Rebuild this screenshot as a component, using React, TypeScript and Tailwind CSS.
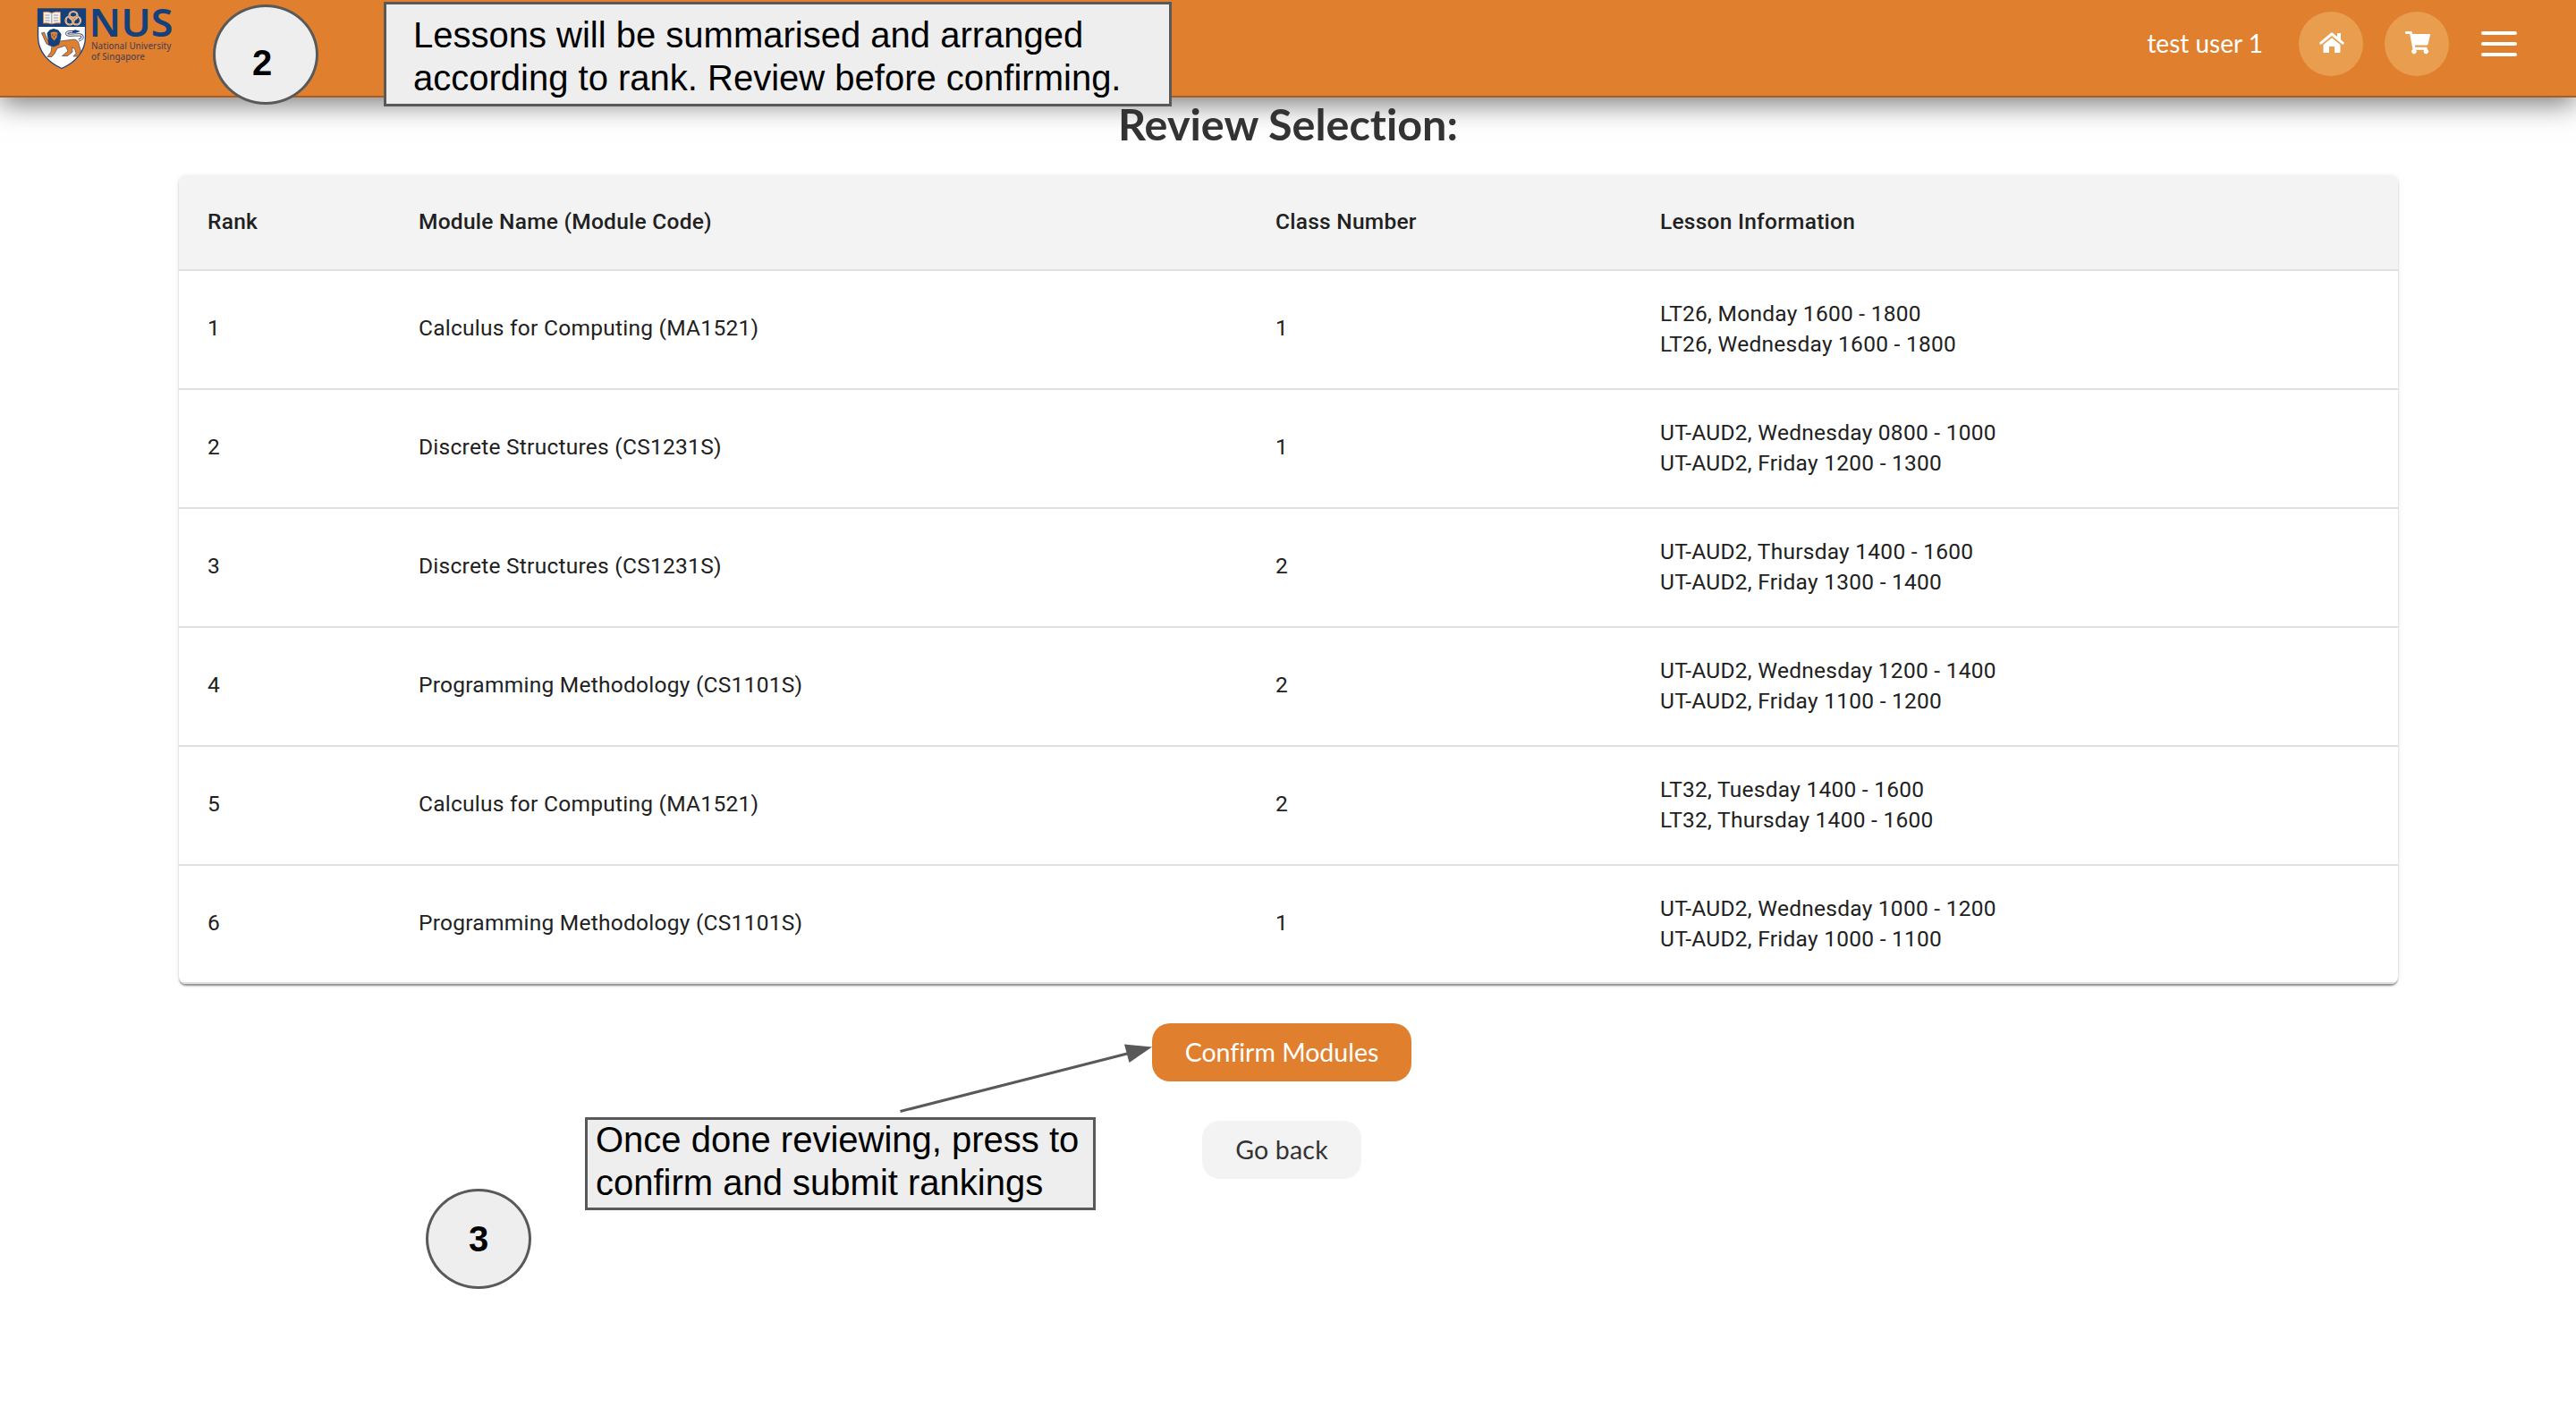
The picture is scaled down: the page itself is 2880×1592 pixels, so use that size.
import React from 'react';

type Row = { name: string; cls: number; lessons: string[] };

const rows: Row[] = [
  { name: 'Calculus for Computing (MA1521)', cls: 1, lessons: ['LT26, Monday 1600 - 1800', 'LT26, Wednesday 1600 - 1800'] },
  { name: 'Discrete Structures (CS1231S)', cls: 1, lessons: ['UT-AUD2, Wednesday 0800 - 1000', 'UT-AUD2, Friday 1200 - 1300'] },
  { name: 'Discrete Structures (CS1231S)', cls: 2, lessons: ['UT-AUD2, Thursday 1400 - 1600', 'UT-AUD2, Friday 1300 - 1400'] },
  { name: 'Programming Methodology (CS1101S)', cls: 2, lessons: ['UT-AUD2, Wednesday 1200 - 1400', 'UT-AUD2, Friday 1100 - 1200'] },
  { name: 'Calculus for Computing (MA1521)', cls: 2, lessons: ['LT32, Tuesday 1400 - 1600', 'LT32, Thursday 1400 - 1600'] },
  { name: 'Programming Methodology (CS1101S)', cls: 1, lessons: ['UT-AUD2, Wednesday 1000 - 1200', 'UT-AUD2, Friday 1000 - 1100'] },
];

const gridCols = 'grid grid-cols-[236px_958px_430px_1fr] items-center pl-[32.5px]';

function Logo() {
  return (
    <svg className="overflow-visible" width="160" height="80" viewBox="0 0 160 80" aria-label="NUS logo">
      <path d="M2.5 10 H55.5 V41 C55.5 58 44 70 29 76.5 C14 70 2.5 58 2.5 41 Z" fill="#fff" stroke="#1b4079" strokeWidth="1.3" />
      <path d="M2.5 10 H55.5 V30 H2.5 Z" fill="#14407c" />
      {/* open book */}
      <path d="M8.5 13.5 Q13 12.5 17.8 14.5 Q22.5 12.5 27.5 13.5 V26 Q22.5 25.3 17.8 26.8 Q13 25.3 8.5 26 Z" fill="#f6efe8" stroke="#e0802f" strokeWidth="0.9" />
      <path d="M17.8 14.5 V26.5 M10.5 17 H15.5 M10.5 20 H15.5 M10.5 23 H15.5 M20 17 H25 M20 20 H25 M20 23 H25" stroke="#8b9dbb" strokeWidth="1" fill="none" />
      {/* interlocking rings */}
      <g fill="none" stroke="#f3d3b4" strokeWidth="2.2">
        <circle cx="42" cy="17.5" r="4.5" />
        <circle cx="38" cy="23" r="4.5" />
        <circle cx="45.5" cy="23" r="4.5" />
      </g>
      <g fill="none" stroke="#e0802f" strokeWidth="0.7">
        <circle cx="42" cy="17.5" r="4.5" />
        <circle cx="38" cy="23" r="4.5" />
        <circle cx="45.5" cy="23" r="4.5" />
      </g>
      {/* lion: tail, body, mane, face */}
      <path d="M48 45 C54 43 53 39 48 38.8 L38 39.2 C33.5 39 33.5 36 38 35.5 H43" stroke="#1b4079" strokeWidth="3" fill="none" />
      <path d="M48 45 C54 43 53 39 48 38.8 L38 39.2 C33.5 39 33.5 36 38 35.5 H43" stroke="#f0dccb" strokeWidth="1.6" fill="none" />
      <path d="M41 34.5 L44 33.2 L50 35 L44 37 L41 36.2 Z" fill="#1b4079" />
      <path d="M6.5 37 L9.5 36 L13 44.5 L19 47 L27 46 L43 44 Q48 45 48.5 51 L50.5 57 L47.5 63 H42 L45 59.5 L43.5 54.5 L40.5 53 L41 58 L35.5 62.5 H29.5 L36 57 L33 51 L24 54 L21 60 L18 63.5 H13 L17 58 L18 52 L12 49 Z" fill="#e0802f" stroke="#54506a" strokeWidth="0.8" strokeLinejoin="round" />
      <path d="M12.5 37 L15.5 33.5 L20 32 L25 33.5 L28.5 38 L28 43 L26 50 L20 52.5 L14 50 L13.5 43 Z" fill="#14407c" />
      <path d="M16.5 36.5 Q20.5 34.5 24.5 36.5 L23.5 42 L20.5 45.5 L17.5 42 Z" fill="#d98238" />
      <path d="M18 39 H19.5 M21.8 39 H23.3 M20.5 40 V42" stroke="#14407c" strokeWidth="0.8" />
      <text x="59.5" y="40.5" fontFamily='"Noto Sans", "Open Sans", sans-serif' fontWeight="600" fontSize="43" textLength="94" lengthAdjust="spacingAndGlyphs" fill="#14407c">NUS</text>
      <text x="62" y="55" fontFamily='"Noto Sans", sans-serif' fontWeight="500" fontSize="10.4" textLength="89.5" lengthAdjust="spacingAndGlyphs" fill="#56464f">National University</text>
      <text x="62" y="66.5" fontFamily='"Noto Sans", sans-serif' fontWeight="500" fontSize="10.4" textLength="60" lengthAdjust="spacingAndGlyphs" fill="#56464f">of Singapore</text>
    </svg>
  );
}

function HomeIcon() {
  return (
    <svg className="ml-0.5 -mt-0.5" width="28" height="24" viewBox="0 0 28 24" fill="none">
      <path d="M1.8 12.2 L14 2 L26.2 12.2" stroke="#fff" strokeWidth="3" strokeLinecap="round" strokeLinejoin="round" />
      <path d="M20 1 H24 V10 L20 6.5 Z" fill="#fff" />
      <path d="M14 6.2 L23.5 14 V22 Q23.5 23 22.5 23 H17 V16.5 Q17 16 16.5 16 H11.5 Q11 16 11 16.5 V23 H5.5 Q4.5 23 4.5 22 V14 Z" fill="#fff" />
    </svg>
  );
}

function CartIcon() {
  return (
    <svg className="-mt-0.5 ml-0.5" width="28" height="26" viewBox="0 0 28 26" fill="#fff">
      <path d="M1.2 0 H6.5 Q7.5 0 7.7 1 L8.2 3 H27 Q28.2 3 28 4.2 L25.5 14.5 Q25.3 15.5 24.2 15.5 H10.8 L11.2 17.8 H23.5 Q25 17.8 24.7 19.2 L24.5 20 A2.7 2.7 0 1 1 21.2 20.8 H12 A2.7 2.7 0 1 1 8.5 20.2 L5.2 3 H1.2 Q0 3 0 1.5 Q0 0 1.2 0 Z" />
    </svg>
  );
}

function Header() {
  return (
    <header className="relative flex h-[109px] justify-between border-b-2 border-[#a95d20] bg-[#e0802f] shadow-[0_8px_28px_rgba(0,0,0,0.5)]">
      <div className="pl-10">
        <Logo />
      </div>
      <div className="flex h-[98px] items-center pr-[66px]">
        <span className="mr-10 whitespace-nowrap pb-[3px] font-['Lato',sans-serif] text-[28px] leading-none text-white">test user 1</span>
        <button className="mr-6 flex size-[72px] items-center justify-center rounded-full bg-[#e99d4f]">
          <HomeIcon />
        </button>
        <button className="mr-9 flex size-[72px] items-center justify-center rounded-full bg-[#e99d4f]">
          <CartIcon />
        </button>
        <button className="flex w-10 flex-col gap-2">
          <span className="h-1 rounded-sm bg-white" />
          <span className="h-1 rounded-sm bg-white" />
          <span className="h-1 rounded-sm bg-white" />
        </button>
      </div>
    </header>
  );
}

function Table() {
  return (
    <section className="mx-auto h-[904px] w-[2481px] overflow-hidden rounded-lg bg-white font-['Roboto',sans-serif] text-[24.5px] leading-[33.7px] tracking-[0.26px] text-[#212121] shadow-[0_3px_2px_-1px_rgba(0,0,0,0.3),0_2px_2px_rgba(0,0,0,0.14),0_1px_5px_rgba(0,0,0,0.12)]">
      <div className={`${gridCols} h-[107px] border-b-2 border-[#e0e0e0] bg-[#f3f3f3] pb-px font-medium`}>
        <span>Rank</span>
        <span>Module Name (Module Code)</span>
        <span>Class Number</span>
        <span>Lesson Information</span>
      </div>
      {rows.map((row, i) => (
        <div key={i} className={`${gridCols} h-[133px] border-b-2 border-[#e0e0e0] pb-[3px] last:h-[132px]`}>
          <span>{i + 1}</span>
          <span>{row.name}</span>
          <span>{row.cls}</span>
          <div className="pt-0.5">
            {row.lessons.map((lesson) => (
              <p key={lesson}>{lesson}</p>
            ))}
          </div>
        </div>
      ))}
    </section>
  );
}

function Annotations() {
  return (
    <>
      <div className="absolute left-[238px] top-[5px] flex h-28 w-[118px] items-center justify-center rounded-[50%] border-[3px] border-[#595959] bg-[#eeeeee] pr-2 pt-[17px] text-[40px] font-bold leading-none">2</div>
      <div className="absolute left-[429px] top-[2px] h-[117px] w-[881px] whitespace-nowrap border-[3px] border-[#595959] bg-[#eeeeee] pl-[30px] pt-[10px] text-[40px] leading-[48px]">
        <p>Lessons will be summarised and arranged</p>
        <p>according to rank. Review before confirming.</p>
      </div>
      <div className="absolute left-[654px] top-[1249px] h-[104px] w-[571px] whitespace-nowrap border-[3px] border-[#595959] bg-[#eeeeee] pl-[9px] text-[40px] leading-[48px]">
        <p className="-mt-[2px]">Once done reviewing, press to</p>
        <p>confirm and submit rankings</p>
      </div>
      <div className="absolute left-[476px] top-[1329px] flex h-28 w-[118px] items-center justify-center rounded-[50%] border-[3px] border-[#595959] bg-[#eeeeee] text-[40px] font-bold leading-none">3</div>
      <svg className="absolute left-[1000px] top-[1160px]" width="290" height="90" viewBox="0 0 290 90">
        <path d="M6.5 82.5 L262 17.5" stroke="#595959" strokeWidth="3" />
        <path d="M288 10.5 L257 7.5 L262.5 28 Z" fill="#595959" />
      </svg>
    </>
  );
}

export default function App() {
  return (
    <div className="relative h-[1592px] w-[2880px] overflow-hidden bg-white font-['Liberation_Sans',Arial,sans-serif] text-black">
      <Header />
      <main className="flex flex-col">
        <h1 className="relative flex h-[87px] justify-center font-['Lato',sans-serif] text-[48.5px] font-bold leading-[58px] text-[#333333] [font-variant-ligatures:none]">Review Selection:</h1>
        <Table />
        <div className="flex w-[2866px] flex-col items-center gap-11 pt-11 font-['Lato',sans-serif] text-[28.5px] [font-variant-ligatures:none]">
          <button className="h-[65px] w-[290px] rounded-[20px] bg-[#e0802f] text-white">Confirm Modules</button>
          <button className="h-[65px] w-[178px] rounded-[20px] bg-[#f3f3f3] tracking-[0.2px] text-[#333333]">Go back</button>
        </div>
      </main>
      <Annotations />
    </div>
  );
}
